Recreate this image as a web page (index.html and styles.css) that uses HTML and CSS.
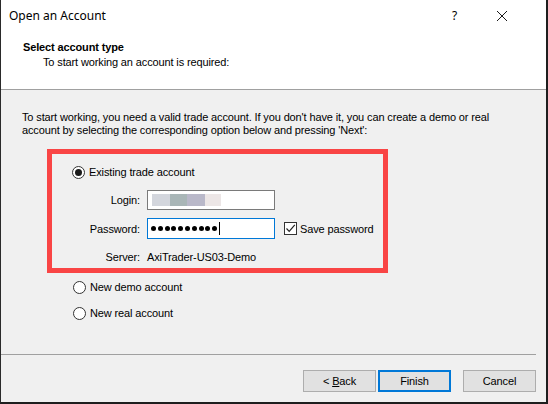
FILE: index.html
```html
<!DOCTYPE html>
<html>
<head>
<meta charset="utf-8">
<link rel="stylesheet" href="styles.css">
</head>
<body>
<div class="window">
  <div class="header">
    <div class="titlebar">
      <span class="title">Open an Account</span>
      <span class="help">?</span>
      <span class="close">
        <svg width="12" height="12" viewBox="0 0 12 12"><path d="M1 1 L11 11 M11 1 L1 11" stroke="#1a1a1a" stroke-width="1" fill="none"/></svg>
      </span>
    </div>
    <div class="heading">Select account type</div>
    <div class="subheading">To start working an account is required:</div>
  </div>
  <div class="content">
    <p class="intro">To start working, you need a valid trade account. If you don't have it, you can create a demo or real<br>account by selecting the corresponding option below and pressing 'Next':</p>
    <div class="highlight">
      <div class="option">
        <span class="radio checked"></span>
        <span>Existing trade account</span>
      </div>
      <div class="form">
        <label class="lbl">Login:</label>
        <div class="input login">
          <span class="blur b1"></span><span class="blur b2"></span><span class="blur b3"></span><span class="blur b4"></span>
        </div>
        <span></span>
        <label class="lbl">Password:</label>
        <div class="input focused">
          <span class="dots"><i></i><i></i><i></i><i></i><i></i><i></i><i></i><i></i><i></i><i></i></span><span class="caret"></span>
        </div>
        <div class="check">
          <span class="box"><svg width="11" height="11" viewBox="0 0 11 11"><path d="M1.5 5.5 L4.2 8.3 L9.8 1.8" stroke="#222" stroke-width="1.2" fill="none"/></svg></span>
          <span>Save password</span>
        </div>
        <label class="lbl">Server:</label>
        <div class="value">AxiTrader-US03-Demo</div>
        <span></span>
      </div>
    </div>
    <div class="option outside first">
      <span class="radio"></span>
      <span>New demo account</span>
    </div>
    <div class="option outside">
      <span class="radio"></span>
      <span>New real account</span>
    </div>
  </div>
  <div class="footer">
    <button class="btn">&lt; <u>B</u>ack</button>
    <button class="btn default">Finish</button>
    <button class="btn cancel">Cancel</button>
  </div>
</div>
</body>
</html>
```
FILE: styles.css
```css
* { box-sizing: border-box; }
html, body { margin: 0; padding: 0; }
body {
  width: 548px;
  height: 404px;
  font-family: "Liberation Sans", Arial, sans-serif;
  font-size: 11px;
  letter-spacing: -0.13px;
  color: #000;
  background: #f0f0f0;
}
.window {
  width: 548px;
  height: 404px;
  border-left: 1px solid #2a2a2a;
  border-right: 2px solid #1e1e1e;
  border-bottom: 2px solid #1e1e1e;
  background: #f0f0f0;
  display: flex;
  flex-direction: column;
}
.header {
  background: #fff;
  height: 90px;
  border-bottom: 1px solid #a0a0a0;
}
.titlebar {
  height: 32px;
  display: flex;
  align-items: center;
  padding-left: 8px;
  padding-bottom: 1px;
  letter-spacing: 0;
}
.title {
  font-family: "Noto Sans", "Liberation Sans", sans-serif;
  font-size: 12px;
  flex: 1;
}
.help {
  font-family: "Noto Sans", sans-serif;
  font-size: 12px;
  width: 12px;
  margin-right: 32px;
}
.close {
  display: flex;
  width: 12px;
  margin-right: 38px;
}
.heading {
  font-weight: bold;
  font-size: 11px;
  line-height: 13px;
  padding-left: 22px;
  margin-top: 9px;
}
.subheading {
  line-height: 13px;
  padding-left: 42px;
  margin-top: 2px;
}
.content {
  flex: 1;
  padding-left: 21px;
}
.intro {
  margin: 21px 0 0;
  line-height: 13px;
}
.highlight {
  margin: 12px 0 0 25px;
  width: 341px;
  height: 124px;
  border: 5px solid #f94545;
  padding: 10px 0 0 20px;
}
.option {
  display: flex;
  align-items: center;
  height: 16px;
  gap: 4px;
}
.radio {
  width: 13px;
  height: 13px;
  border: 1px solid #333;
  border-radius: 50%;
  background: #fff;
  display: flex;
  align-items: center;
  justify-content: center;
}
.radio.checked::after {
  content: "";
  width: 7px;
  height: 7px;
  border-radius: 50%;
  background: #1a1a1a;
}
.outside { padding-left: 51px; margin-top: 10px; }
.outside.first { margin-top: 6px; }
.form {
  display: grid;
  grid-template-columns: 88px 128px auto;
  column-gap: 7px;
  row-gap: 8px;
  margin: 10px 0 0 -20px;
  align-items: center;
}
.lbl { text-align: right; color: #000; }
.input {
  height: 20px;
  background: #fff;
  border: 1px solid #7a7a7a;
  display: flex;
  align-items: center;
  padding-left: 4px;
}
.input.focused { border-color: #0078d7; height: 21px; padding-left: 3px; }
.blur { display: block; height: 12px; }
.b1 { width: 18px; background: #d3d6dd; }
.b2 { width: 17px; background: #a9b6b7; }
.b3 { width: 18px; background: #b9b8c9; }
.b4 { width: 16px; background: #ece6e6; }
.dots { display: flex; gap: 1.8px; }
.dots i { display: block; width: 5px; height: 5px; border-radius: 50%; background: #000; }
.caret { width: 1px; height: 13px; background: #000; margin-left: 2px; }
.check { display: flex; align-items: center; gap: 3px; margin-left: 2px; }
.box {
  width: 13px; height: 13px; border: 1px solid #333; background: #fff;
  display: flex; align-items: center; justify-content: center;
}
.value { height: 20px; line-height: 20px; }
.footer {
  height: 48px;
  border-top: 1px solid #a0a0a0;
  margin-right: 10px;
  display: flex;
  justify-content: flex-end;
  align-items: flex-start;
  padding-top: 15px;
}
.btn {
  width: 73px;
  height: 22px;
  margin: 0;
  padding: 0;
  border: 1px solid #adadad;
  background: #e1e1e1;
  font-family: "Liberation Sans", Arial, sans-serif;
  font-size: 11px;
  letter-spacing: -0.13px;
  color: #000;
}
.btn.default { border: 2px solid #0078d7; margin-left: 2px; }
.btn.cancel { margin-left: 12px; }
```
